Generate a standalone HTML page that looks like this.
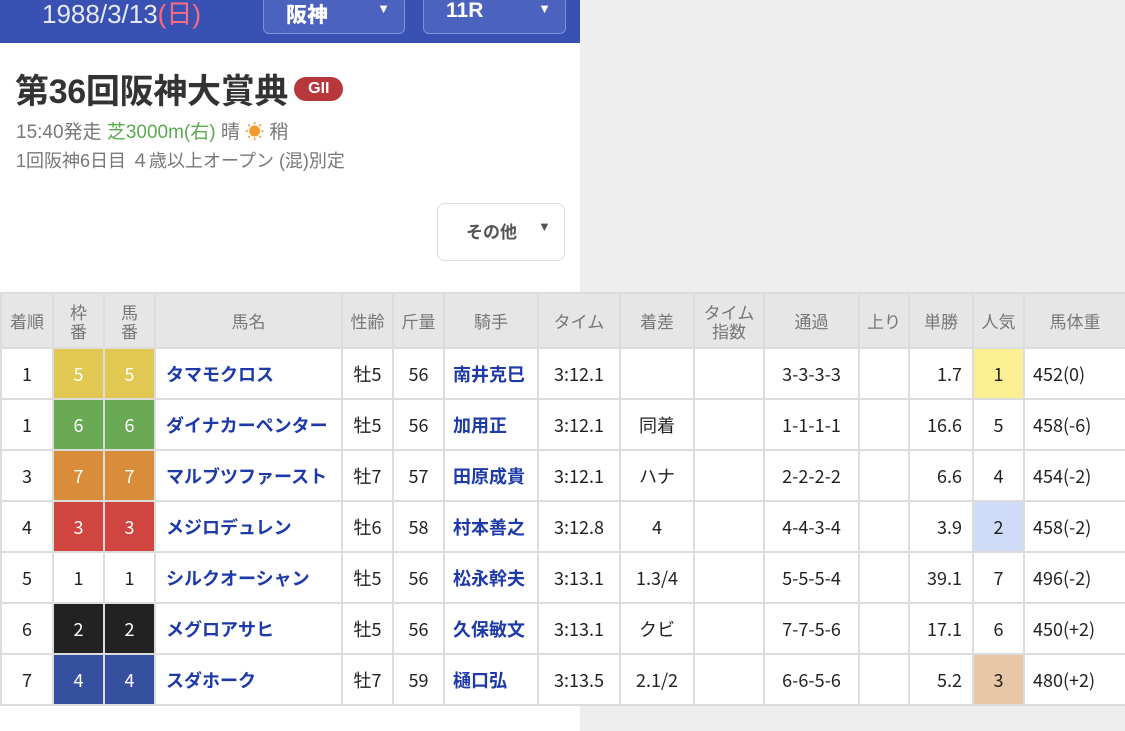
<!DOCTYPE html>
<html><head><meta charset="utf-8"><style>
body{margin:0;width:1125px;height:731px;background:#eeeeee;position:relative;overflow:hidden;font-family:"Liberation Sans","Noto Sans CJK JP",sans-serif;}
.left{position:absolute;left:0;top:0;width:580px;height:731px;background:#fff;}
.bar{position:absolute;left:0;top:0;width:580px;height:43px;background:#3a51b4;}
.date{position:absolute;left:42px;top:-6px;color:#fff;font-size:26px;color:#e6e9f8;}
.date span{color:#ff6b7d;}
.sel{position:absolute;top:-4px;height:36px;border:1px solid #7d8fd6;border-radius:6px;background:#4b62bf;color:#fff;font-size:21px;font-weight:bold;}
.sel b{position:absolute;left:22px;top:2px;}
.sel i{position:absolute;right:14px;top:4px;font-style:normal;font-size:13px;}
h1{position:absolute;left:15px;top:64px;margin:0;font-size:34px;color:#333;font-weight:bold;letter-spacing:-0.3px;}
.g{display:inline-block;vertical-align:middle;background:#b8373a;color:#fff;font-size:16px;border-radius:14px;padding:3px 14px;position:relative;top:-5px;margin-left:6px;letter-spacing:0;}
.l1{position:absolute;left:16px;top:117px;font-size:19px;color:#777;}
.l2{position:absolute;left:16px;top:147px;font-size:18px;color:#777;}
.other{position:absolute;left:437px;top:203px;width:126px;height:56px;border:1px solid #ddd;border-radius:8px;background:#fff;font-size:17px;font-weight:bold;color:#555;}
table{position:absolute;left:0;top:292px;border-collapse:collapse;table-layout:fixed;width:1125px;background:#fff;font-family:"Noto Sans CJK JP",sans-serif;}
td,th{border:2px solid #dcdcdc;font-size:18px;color:#222;text-align:center;padding:0;height:49px;}
th{background:#e6e6e6;color:#777;font-weight:normal;height:53px;font-size:17px;line-height:19px;}
td.n{text-align:left;padding-left:10px;color:#1d3aa8;font-weight:bold;font-size:18px;}
td.j{text-align:left;padding-left:8px;color:#1d3aa8;font-weight:bold;font-size:18px;}
td.r{text-align:right;padding-right:10px;}
td.w{text-align:left;padding-left:8px;}
.y{background:#e0c853;color:#fff}.gr{background:#6aaa55;color:#fff}.o{background:#d98c3a;color:#fff}.rd{background:#d04540;color:#fff}.bk{background:#222;color:#fff}.bl{background:#3650a0;color:#fff}
td.y,td.gr,td.o,td.rd,td.bk,td.bl{color:#fff}
</style></head><body>
<div class="left"></div>
<div class="bar"></div>
<div class="date">1988/3/13<span>(日)</span></div>
<div class="sel" style="left:263px;width:140px"><b>阪神</b><i>▼</i></div>
<div class="sel" style="left:423px;width:141px"><b>11R</b><i>▼</i></div>
<h1>第36回阪神大賞典<span class="g">GII</span></h1>
<div class="l1">15:40発走 <span style="color:#5aab4e">芝3000m(右)</span> 晴 <span style="color:#f39a2b">☀</span> 稍</div>
<div class="l2">1回阪神6日目 ４歳以上オープン (混)別定</div>
<div class="other"><span style="position:absolute;left:28px;top:14px">その他</span><span style="position:absolute;left:100px;top:15px;font-size:13px">▼</span></div>
<table>
<colgroup><col style="width:52px"><col style="width:51px"><col style="width:51px"><col style="width:187px"><col style="width:51px"><col style="width:51px"><col style="width:94px"><col style="width:82px"><col style="width:74px"><col style="width:70px"><col style="width:95px"><col style="width:50px"><col style="width:64px"><col style="width:51px"><col style="width:102px"></colgroup>
<tr><th>着順</th><th>枠<br>番</th><th>馬<br>番</th><th>馬名</th><th>性齢</th><th>斤量</th><th>騎手</th><th>タイム</th><th>着差</th><th>タイム<br>指数</th><th>通過</th><th>上り</th><th>単勝</th><th>人気</th><th>馬体重</th></tr>
<tr><td>1</td><td class="y">5</td><td class="y">5</td><td class="n">タマモクロス</td><td>牡5</td><td>56</td><td class="j">南井克巳</td><td>3:12.1</td><td></td><td></td><td>3-3-3-3</td><td></td><td class="r">1.7</td><td style="background:#fbef94">1</td><td class="w">452(0)</td></tr>
<tr><td>1</td><td class="gr">6</td><td class="gr">6</td><td class="n">ダイナカーペンター</td><td>牡5</td><td>56</td><td class="j">加用正</td><td>3:12.1</td><td>同着</td><td></td><td>1-1-1-1</td><td></td><td class="r">16.6</td><td>5</td><td class="w">458(-6)</td></tr>
<tr><td>3</td><td class="o">7</td><td class="o">7</td><td class="n">マルブツファースト</td><td>牡7</td><td>57</td><td class="j">田原成貴</td><td>3:12.1</td><td>ハナ</td><td></td><td>2-2-2-2</td><td></td><td class="r">6.6</td><td>4</td><td class="w">454(-2)</td></tr>
<tr><td>4</td><td class="rd">3</td><td class="rd">3</td><td class="n">メジロデュレン</td><td>牡6</td><td>58</td><td class="j">村本善之</td><td>3:12.8</td><td>4</td><td></td><td>4-4-3-4</td><td></td><td class="r">3.9</td><td style="background:#cfdcf7">2</td><td class="w">458(-2)</td></tr>
<tr><td>5</td><td>1</td><td>1</td><td class="n">シルクオーシャン</td><td>牡5</td><td>56</td><td class="j">松永幹夫</td><td>3:13.1</td><td>1.3/4</td><td></td><td>5-5-5-4</td><td></td><td class="r">39.1</td><td>7</td><td class="w">496(-2)</td></tr>
<tr><td>6</td><td class="bk">2</td><td class="bk">2</td><td class="n">メグロアサヒ</td><td>牡5</td><td>56</td><td class="j">久保敏文</td><td>3:13.1</td><td>クビ</td><td></td><td>7-7-5-6</td><td></td><td class="r">17.1</td><td>6</td><td class="w">450(+2)</td></tr>
<tr><td>7</td><td class="bl">4</td><td class="bl">4</td><td class="n">スダホーク</td><td>牡7</td><td>59</td><td class="j">樋口弘</td><td>3:13.5</td><td>2.1/2</td><td></td><td>6-6-5-6</td><td></td><td class="r">5.2</td><td style="background:#e8c7a6">3</td><td class="w">480(+2)</td></tr>
</table>
</body></html>
